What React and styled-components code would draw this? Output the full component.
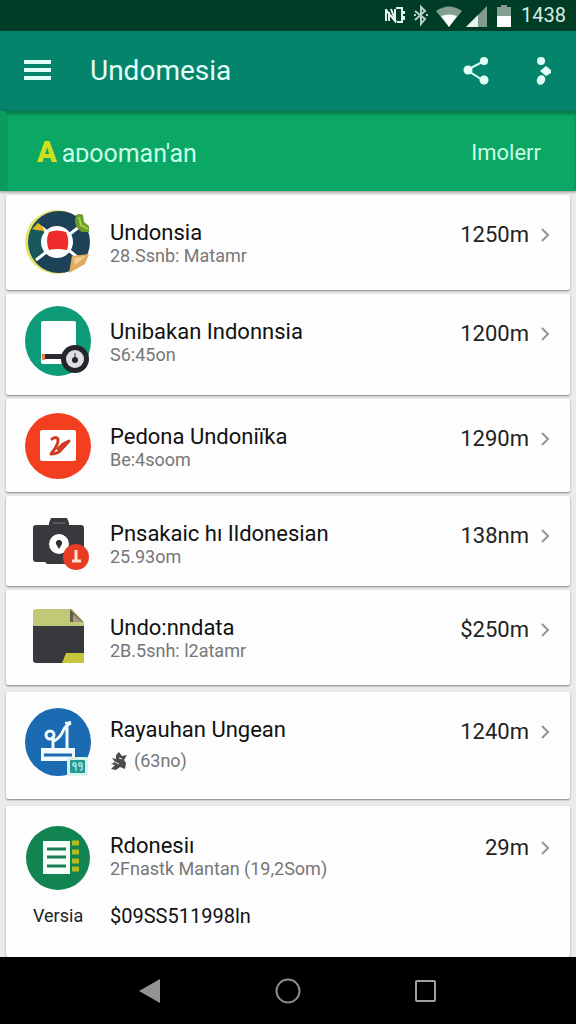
import React from "react";
import styled, {createGlobalStyle} from "styled-components";

const LifebuoyIcon = () => (
    <svg width="66" height="66" viewBox="0 0 66 66" aria-hidden="true">
        <circle cx="32" cy="33" r="32" fill="#e3e46a"/>
        <circle cx="34" cy="33" r="31" fill="#1d4156"/>
        <path d="M13 11A31 31 0 0 0 11 53L24 40V26z" fill="#17595a"/>
        <path d="M11 51L54 18M16 18L52 48" stroke="#fff" strokeWidth="3"/>
        <path d="M7 20l6-6 4 3 3 5-9-1z" fill="#e6b422"/>
        <path d="M51 6q4-2 7 0l1 7 5 4v6h-7q-7-4-7-11z" fill="#6b9d2c"/>
        <path d="M54 8l2 8 7 4" stroke="#a6ca4b" strokeWidth="2" fill="none"/>
        <path d="M47 47l17-2-4 10-16 9z" fill="#dfab61"/>
        <path d="M49 49l12-2-11 9z" fill="#f2cf94"/>
        <circle cx="32" cy="33" r="16" fill="#fff"/>
        <path d="M24 23q8-3 17 0 4 9 1 18-10-2-18 0-4-9 0-18z" fill="#ed2b2b"/>
    </svg>
)

const WheelIcon = () => (
    <svg width="66" height="70" viewBox="0 0 66 70" aria-hidden="true">
        <ellipse cx="33" cy="35" rx="33" ry="35" fill="#0d9b78"/>
        <rect x="16" y="15" width="35" height="43" rx="2" fill="#fff"/>
        <rect x="18" y="48" width="22" height="5" fill="#2a2c31"/>
        <rect x="17" y="48" width="3" height="6" fill="#ee8055"/>
        <circle cx="50" cy="53" r="14" fill="#24262b"/>
        <circle cx="50" cy="53" r="9" fill="#dfe0e3"/>
        <path d="M50 47v6" stroke="#85878c" strokeWidth="2"/>
        <circle cx="50" cy="54" r="3" fill="#24262b"/>
    </svg>
)

const BirdIcon = () => (
    <svg width="66" height="66" viewBox="0 0 66 66" aria-hidden="true">
        <circle cx="33" cy="33" r="33" fill="#f33f20"/>
        <rect x="15" y="17" width="36" height="31" rx="2" fill="#fff"/>
        <path d="M27 26q4-3 6 0 1 5-7 15 6 0 9-3l9-10-6 3-5 5" fill="none" stroke="#cf3a23" strokeWidth="3" strokeLinecap="round" strokeLinejoin="round"/>
    </svg>
)

const CameraIcon = () => (
    <svg width="66" height="66" viewBox="0 0 66 66" aria-hidden="true">
        <path d="M24 13l2-5h16l2 5v2h12q3 0 3 3v33q0 3-3 3H22l-2-2h-9q-3 0-3-3V18q0-3 3-3h13z" fill="#37393d"/>
        <path d="M27 14l1-2h12l1 2z" fill="#56585c"/>
        <circle cx="34" cy="34" r="10" fill="#fff"/>
        <path d="M34 30a3 3 0 0 1 3 4l-3 5-3-5a3 3 0 0 1 3-4z" fill="#2c2e33"/>
        <circle cx="51" cy="47" r="13" fill="#e93c25"/>
        <path d="M51 40v11M47 51h9" stroke="#ffe3d8" strokeWidth="3"/>
    </svg>
)

const NoteIcon = () => (
    <svg width="66" height="66" viewBox="0 0 66 66" aria-hidden="true">
        <path d="M11 5h36l12 13v4H8V8q0-3 3-3z" fill="#bfc977"/>
        <path d="M45 5l13 13H45z" fill="#665a4b"/>
        <path d="M48 10l9 8h-9z" fill="#a69c82"/>
        <path d="M8 22h51v34q0 3-3 3H11q-3 0-3-3z" fill="#38393d"/>
        <path d="M41 49h18v7q0 3-3 3H37z" fill="#c5c63c"/>
    </svg>
)

const PlantIcon = () => (
    <svg width="66" height="68" viewBox="0 0 66 68" aria-hidden="true">
        <ellipse cx="33" cy="34" rx="33" ry="34" fill="#1b6bb3"/>
        <circle cx="25" cy="27" r="4" fill="none" stroke="#f4fbff" strokeWidth="3"/>
        <path d="M28 28v12M29 33q6-3 9-10 2-5 8-8M42 16v24" fill="none" stroke="#f4fbff" strokeWidth="3"/>
        <path d="M40 14l6-1v3h-6z" fill="#f4fbff"/>
        <path d="M16 40h34v13H16z" fill="#f4fbff"/>
        <path d="M19 47h28" stroke="#1b6bb3" strokeWidth="3"/>
        <rect x="42" y="49" width="21" height="19" rx="3" fill="#d7f1ec"/>
        <rect x="45" y="52" width="15" height="13" rx="1" fill="#259a94"/>
        <path d="M51 58h-3v-3h3v8M57 58h-3v-3h3v7h-2" stroke="#e9ffff" strokeWidth="1" fill="none"/>
    </svg>
)

const LedgerIcon = () => (
    <svg width="66" height="66" viewBox="0 0 66 66" aria-hidden="true">
        <circle cx="33" cy="33" r="32" fill="#118451"/>
        <rect x="18" y="16" width="27" height="33" fill="#f7fffa"/>
        <path d="M22 24h19M22 32h19M22 41h19" stroke="#187d56" strokeWidth="3"/>
        <path d="M47 18h7M47 27h7M47 36h7M47 44h7" stroke="#b5bc20" strokeWidth="5"/>
    </svg>
)

const SplatIcon = () => (
    <svg width="18" height="20" viewBox="0 0 18 20" aria-hidden="true">
        <path d="M6 4l3-3 3 4 5-1-3 5 2 3-1 6-5-2-4 3-5-1 4-4-4-1 4-2-3-4 4 1z" fill="#4b4b4b"/>
        <path d="M5 11l4 2M9 7l3 1" stroke="#eee" strokeWidth="1"/>
    </svg>
)

const ChevronIcon = () => (
    <svg width="10" height="14" viewBox="0 0 10 14" aria-hidden="true">
        <path d="M2 1l6 6-6 6" fill="none" stroke="#949494" strokeWidth="2"/>
    </svg>
)

const StatusIcons = () => (
    <svg width="130" height="24" viewBox="0 0 130 24" aria-hidden="true">
        <path d="M3 6v12M6 9v9M3 7l9 11V6M8 6l5 13" stroke="#e5f2ec" strokeWidth="2" fill="none"/>
        <path d="M13 5h6v14h-5M21 8v3M21 13v4" stroke="#e5f2ec" strokeWidth="2" fill="none"/>
        <path d="M32 8l10 8-4 5V4l4 4-10 9M31 12h2M43 12h2" stroke="#b9cfc5" strokeWidth="2" fill="none"/>
        <path d="M53 8q13-9 26 0L66 24z" fill="#829f92"/>
        <path d="M58 13q8-3 16 0l-8 11z" fill="#fff"/>
        <path d="M104 3v21H83z" fill="#7f9c8e"/>
        <path d="M95 12v12H83z" fill="#e9f2ed"/>
        <path d="M118 2h6v2h4v20h-14V4h4z" fill="#839d91"/>
        <path d="M114 13h14v11h-14z" fill="#fff"/>
    </svg>
)

const places = [
    {name: 'Undonsia', note: '28.Ssnb: Matamr', value: '1250m', Icon: LifebuoyIcon, height: 95},
    {name: 'Unibakan Indonnsia', note: 'S6:45on', value: '1200m', Icon: WheelIcon, height: 101},
    {name: 'Pedona Undoniïka', note: 'Be:4soom', value: '1290m', Icon: BirdIcon, height: 93},
    {name: 'Pnsakaic hı Ildonesian', note: '25.93om', value: '138nm', Icon: CameraIcon, height: 90},
    {name: 'Undo:nndata', note: '2B.5snh: l2atamr', value: '$250m', Icon: NoteIcon, height: 95},
    {name: 'Rayauhan Ungean', note: '(63no)', value: '1240m', Icon: PlantIcon, height: 107, roomy: true, marked: true},
    {name: 'Rdonesiı', note: '2Fnastk Mantan (19,2Som)', value: '29m', Icon: LedgerIcon, height: 150, roomy: true,
        extra: {label: 'Versia', text: '$09SS511998ln'}},
]

export default function App() {
    return (
        <Page>
            <GlobalStyle/>
            <StatusBar>
                <StatusIcons/>
                <time>1438</time>
            </StatusBar>
            <AppBar>
                <IconButton aria-label="Menu">
                    <svg width="28" height="22" viewBox="0 0 28 22">
                        <path d="M0 2h27M0 10h27M0 18h27" stroke="#e2fff8" strokeWidth="4"/>
                    </svg>
                </IconButton>
                <AppTitle>Undomesia</AppTitle>
                <IconButton aria-label="Share">
                    <svg width="26" height="28" viewBox="0 0 26 28">
                        <path d="M21 4L4 13l17 11" fill="none" stroke="#d5fff4" strokeWidth="2"/>
                        <circle cx="21" cy="4" r="4" fill="#e2fff8"/>
                        <circle cx="5" cy="13" r="4.5" fill="#e2fff8"/>
                        <circle cx="21" cy="23" r="4.5" fill="#e2fff8"/>
                    </svg>
                </IconButton>
                <IconButton aria-label="More">
                    <svg width="16" height="28" viewBox="0 0 16 28">
                        <ellipse cx="5" cy="4" rx="4" ry="4" fill="#e2fff8"/>
                        <path d="M4 14l6-5 5 4v3l-5 3z" fill="#e2fff8"/>
                        <ellipse cx="5" cy="23" rx="4" ry="5" transform="rotate(25 5 23)" fill="#e2fff8"/>
                    </svg>
                </IconButton>
            </AppBar>
            <Banner>
                <BannerTitle><BannerInitial>A</BannerInitial>aᴅooman'an</BannerTitle>
                <BannerLink href="#all">Imolerr</BannerLink>
            </Banner>
            <List>
                {places.map(({name, note, value, Icon, height, roomy, marked, extra}) => (
                    <Card key={name} $height={height} $roomy={roomy}>
                        <Row href="#place" $tall={!!extra}>
                            <Avatar $roomy={roomy}><Icon/></Avatar>
                            <Details>
                                <Name>{name}</Name>
                                <Note $marked={marked}>{marked && <SplatIcon/>}{note}</Note>
                            </Details>
                            <Value>{value}<ChevronIcon/></Value>
                        </Row>
                        {extra && (
                            <Extra>
                                <ExtraLabel>{extra.label}</ExtraLabel>
                                <ExtraText>{extra.text}</ExtraText>
                            </Extra>
                        )}
                    </Card>
                ))}
            </List>
            <NavBar>
                <IconButton aria-label="Back">
                    <svg width="22" height="26" viewBox="0 0 22 26">
                        <path d="M21 1v24L0 13z" fill="#939393"/>
                    </svg>
                </IconButton>
                <IconButton aria-label="Home">
                    <svg width="26" height="26" viewBox="0 0 26 26">
                        <circle cx="13" cy="13" r="11.5" fill="none" stroke="#8c8c8c" strokeWidth="2"/>
                    </svg>
                </IconButton>
                <IconButton aria-label="Recent apps">
                    <svg width="22" height="22" viewBox="0 0 22 22">
                        <rect x="1" y="1" width="19" height="20" rx="1" fill="none" stroke="#a0a0a0" strokeWidth="2"/>
                    </svg>
                </IconButton>
            </NavBar>
        </Page>
    )
}

const GlobalStyle = createGlobalStyle`
  * {
    box-sizing: border-box;
  }

  body {
    margin: 0;
    font-family: Roboto, 'Liberation Sans', sans-serif;
  }
`

const Page = styled.div`
  display: flex;
  flex-direction: column;
  min-height: 100vh;
  background: #ebebeb;
`

const StatusBar = styled.div`
  display: flex;
  align-items: center;
  justify-content: flex-end;
  gap: 8px;
  height: 31px;
  padding: 0 10px 2px 0;
  background: #003d27;
  color: #dcece4;
  font-size: 20px;
  line-height: 24px;
`

const AppBar = styled.header`
  display: flex;
  align-items: center;
  height: 80px;
  padding: 0 8px 0 14px;
  background: #04856b;
`

const IconButton = styled.button`
  display: flex;
  align-items: center;
  justify-content: center;
  width: 48px;
  height: 48px;
  padding: 0;
  border: 0;
  background: none;

  ${AppBar} & + & {
    margin-left: 20px;
  }
`

const AppTitle = styled.h1`
  flex: 1;
  margin: 0 0 0 28px;
  color: #e2fff8;
  font-size: 28px;
  font-weight: 400;
  line-height: 32px;
`

const Banner = styled.section`
  display: flex;
  align-items: center;
  justify-content: space-between;
  height: 80px;
  padding: 4px 35px 0 31px;
  border-left: 6px solid #0b9c5d;
  background: #0aa765;
  color: #c9ffe6;
  box-shadow: inset 0 3px 3px rgba(0, 60, 30, 0.4), 0 1px 3px rgba(0, 0, 0, 0.4);
`

const BannerTitle = styled.h2`
  display: flex;
  align-items: baseline;
  gap: 5px;
  margin: 0;
  font-size: 25px;
  font-weight: 400;
  line-height: 32px;
`

const BannerInitial = styled.span`
  color: #cfdf20;
  font-size: 29px;
  font-weight: 900;
`

const BannerLink = styled.a`
  color: inherit;
  font-size: 22px;
  line-height: 32px;
  text-decoration: none;
`

const List = styled.ul`
  display: flex;
  flex: 1;
  flex-direction: column;
  gap: 4px;
  margin: 0;
  padding: 4px 6px 0;
  list-style: none;
`

const Card = styled.li`
  min-height: ${({$height}) => $height}px;
  margin-top: ${({$roomy}) => $roomy ? 3 : 0}px;
  border-radius: 2px;
  background: #fdfdfd;
  box-shadow: 0 1px 2px rgba(0, 0, 0, 0.45);

  &:last-child {
    flex: 1;
  }
`

const Row = styled.a`
  display: flex;
  align-items: flex-start;
  padding: ${({$tall}) => $tall ? 2 : 0}px 20px 0 19px;
  color: #111;
  text-decoration: none;
`

const Avatar = styled.span`
  display: flex;
  align-items: center;
  justify-content: center;
  width: 66px;
  height: 66px;
  margin-top: ${({$roomy}) => $roomy ? 17 : 14}px;
`

const Details = styled.span`
  display: flex;
  flex: 1;
  flex-direction: column;
  padding: 26px 0 0 19px;
`

const Name = styled.span`
  font-size: 22px;
  line-height: 24px;
`

const Note = styled.span`
  display: flex;
  align-items: center;
  gap: 6px;
  margin-top: ${({$marked}) => $marked ? 8 : 0}px;
  color: #777;
  font-size: 18px;
  line-height: 22px;
`

const Value = styled.span`
  display: flex;
  align-items: center;
  gap: 11px;
  padding-top: 27px;
  color: #222;
  font-size: 22px;
  line-height: 26px;
`

const Extra = styled.div`
  display: flex;
  align-items: center;
  margin-top: 11px;
  padding: 0 20px 0 27px;
  color: #222;
  font-size: 20px;
  line-height: 28px;
`

const ExtraLabel = styled.span`
  width: 77px;
  font-size: 18px;
`

const ExtraText = styled.span`
  color: #111;
`

const NavBar = styled.nav`
  display: flex;
  align-items: center;
  justify-content: center;
  gap: 90px;
  height: 67px;
  background: #000;
`
